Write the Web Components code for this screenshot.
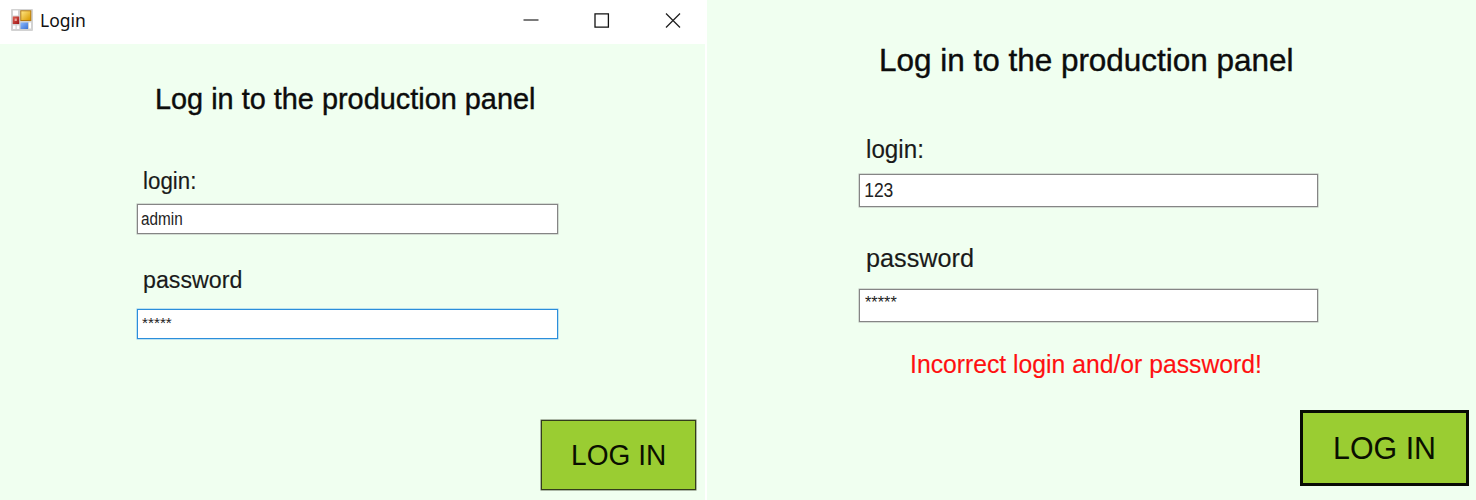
<!DOCTYPE html>
<html lang="en">
<head>
<meta charset="utf-8">
<title>Login</title>
<style>
html,body{margin:0;width:1476px;height:500px;overflow:hidden;background:#fff}
body{font-family:"Liberation Sans",Arial,sans-serif;color:#111}
</style>
</head>
<body>
<login-app></login-app>
<script>
const define = (name, html, ready) => customElements.define(name, class extends HTMLElement {
  constructor() {
    super();
    const t = document.createElement('template');
    t.innerHTML = html;
    this.attachShadow({mode: 'open'}).append(t.content.cloneNode(true));
  }
  connectedCallback() { if (ready) ready(this, this.shadowRoot); }
});

// A single line of text whose glyphs fill exactly the given width.
define('fit-text', `
  <style>
    :host{display:block;flex:none}
    span{display:block;width:max-content;white-space:pre;transform-origin:0 50%;-webkit-text-stroke:var(--stroke,0) currentColor}
  </style>
  <span></span>`, (host, root) => {
  const span = root.querySelector('span');
  span.textContent = host.getAttribute('text');
  const size = host.getAttribute('size'), line = host.getAttribute('line');
  const family = host.getAttribute('family') || '"Liberation Sans"';
  host.style.font = `${size}px/${line}px ${family}, Arial, sans-serif`;
  host.style.height = line + 'px';
  const ctx = document.createElement('canvas').getContext('2d');
  ctx.font = `${size}px ${family}, Arial, sans-serif`;
  const m = ctx.measureText(span.textContent);
  const ink = m.actualBoundingBoxRight + m.actualBoundingBoxLeft;
  const k = Number(host.getAttribute('width')) / ink;
  host.style.width = host.getAttribute('width') + 'px';
  span.style.transform = `scaleX(${k}) translateX(${m.actualBoundingBoxLeft}px)`;
});

define('text-field', `
  <style>
    :host{display:block;flex:none;box-sizing:border-box;background:#fff;
      border:1.5px solid var(--edge,#858585);box-shadow:0 0 0 .5px var(--halo,#b5bab5);overflow:hidden;color:#222}
  </style>
  <slot></slot>`);

define('action-button', `
  <style>
    :host{display:flex;flex:none;box-sizing:border-box;align-items:center;justify-content:center;background:#9acd32;color:#0a0f00}
  </style>
  <slot></slot>`);

define('title-bar', `
  <style>
    :host{display:flex;height:44px;background:#fff;box-sizing:border-box;padding:0 24px 0 11px}
    .icon{margin-top:9px;width:22px;height:22px}
    fit-text{margin:7px 0 0 8px;color:#111}
    .controls{display:flex;gap:55px;margin:13px 0 0 auto}
    svg{display:block;flex:none}
  </style>
  <svg class="icon" viewBox="0 0 22 22">
    <defs>
      <linearGradient id="y" x1="0" y1="0" x2="1" y2="1"><stop stop-color="#ffe583"/><stop offset="1" stop-color="#d99a00"/></linearGradient>
      <linearGradient id="r" x1="0" y1="0" x2="1" y2="1"><stop stop-color="#df5d50"/><stop offset="1" stop-color="#9e1717"/></linearGradient>
      <linearGradient id="b" x1="0" y1="0" x2="1" y2="1"><stop stop-color="#8db9ff"/><stop offset="1" stop-color="#3c73d4"/></linearGradient>
    </defs>
    <rect width="22" height="22" rx="1" fill="#d2d2d2"/>
    <path d="M2 1.5h5v5H2zM2 16.5h2.5v3.500H2zM5.700 16.500h2.500v3.500H5.700zM18 13.500h2v6h-2z" fill="#fff"/>
    <rect x="1.700" y="7.500" width="6.500" height="7.500" fill="url(#r)"/>
    <rect x="3.600" y="9.500" width="2.200" height="2.500" fill="#eca49c"/>
    <rect x="9.300" y="1.300" width="11" height="10.700" fill="#b77b10"/>
    <rect x="10.300" y="2.300" width="9" height="8.700" fill="url(#y)"/>
    <rect x="9.500" y="13.500" width="7.500" height="6.500" fill="url(#b)"/>
  </svg>
  <fit-text text="Login" size="18.5" line="26" width="43.500" family='"Noto Sans"'></fit-text>
  <div class="controls">
    <svg width="16" height="16" viewBox="0 0 16 16"><path d="M0.500 7h15" stroke="#333" stroke-width="1.300"/></svg>
    <svg width="16" height="16" viewBox="0 0 16 16"><path d="M1 .8h13.400v13.400H1z" fill="none" stroke="#111" stroke-width="1.300"/></svg>
    <svg width="16" height="16" viewBox="0 0 16 16"><path d="M1 .5 15 14.500M15 .5 1 14.500" stroke="#222" stroke-width="1.300"/></svg>
  </div>`);

define('login-window', `
  <style>
    :host{display:flex;flex-direction:column;width:705px;height:500px;background:#f0fff0}
    h1{margin:38px 0 0 156.500px;font-weight:400;color:#0c0c0c;--stroke:.4px}
    .label{margin-left:144px;color:#1a1a1a;--stroke:.15px}
    .user{margin-top:52px}
    .pass{margin-top:33px}
    text-field{width:421px;height:30px;margin-left:137px}
    .name{margin-top:10px}
    .secret{margin-top:16px;--edge:#2b8edb;--halo:#8cc6ee}
    .name fit-text{margin:4px 0 0 3px}
    .secret fit-text{margin:3px 0 0 3.500px}
    action-button{width:155px;height:70px;margin:81px 9px 0 auto;border:1.500px solid #333d1c;box-shadow:0 0 0 .5px #66705a}
  </style>
  <title-bar></title-bar>
  <h1><fit-text text="Log in to the production panel" size="29" line="34" width="377"></fit-text></h1>
  <fit-text class="label user" text="login:" size="23" line="26" width="51"></fit-text>
  <text-field class="name"><fit-text text="admin" size="17.500" line="20" width="41"></fit-text></text-field>
  <fit-text class="label pass" text="password" size="23" line="26" width="97.500"></fit-text>
  <text-field class="secret"><fit-text text="*****" size="15" line="20" width="30"></fit-text></text-field>
  <action-button><fit-text text="LOG IN" size="29.500" line="34" width="91"></fit-text></action-button>`);

define('login-panel', `
  <style>
    :host{display:flex;flex-direction:column;width:769px;height:500px;background:#f0fff0}
    h1{margin:42px 0 0 173.500px;font-weight:400;color:#0c0c0c;--stroke:.4px}
    .label{margin-left:160px;color:#1a1a1a;--stroke:.15px}
    .user{margin-top:57px}
    .pass{margin-top:36.500px}
    text-field{width:459px;height:33px;margin-left:152px}
    .name{margin-top:11px}
    .secret{margin-top:17.500px}
    .name fit-text{margin:2.500px 0 0 5px}
    .secret fit-text{margin:2.500px 0 0 5px}
    .error{margin:27.500px 0 0 204.500px;color:#ff1010;--stroke:.15px}
    action-button{width:169px;height:76px;margin:32.500px 7px 0 auto;border:3px solid #080b04}
  </style>
  <h1><fit-text text="Log in to the production panel" size="31.500" line="36" width="410.500"></fit-text></h1>
  <fit-text class="label user" text="login:" size="25" line="28" width="55"></fit-text>
  <text-field class="name"><fit-text text="123" size="20.500" line="24" width="28"></fit-text></text-field>
  <fit-text class="label pass" text="password" size="25" line="28" width="106"></fit-text>
  <text-field class="secret"><fit-text text="*****" size="16" line="20" width="31.500"></fit-text></text-field>
  <fit-text class="error" text="Incorrect login and/or password!" size="25" line="28" width="348"></fit-text>
  <action-button><fit-text text="LOG IN" size="32" line="36" width="99"></fit-text></action-button>`);

define('login-app', `
  <style>:host{display:flex;gap:2px;width:1476px;height:500px;background:#fff}</style>
  <login-window></login-window><login-panel></login-panel>`);
</script>
</body>
</html>
